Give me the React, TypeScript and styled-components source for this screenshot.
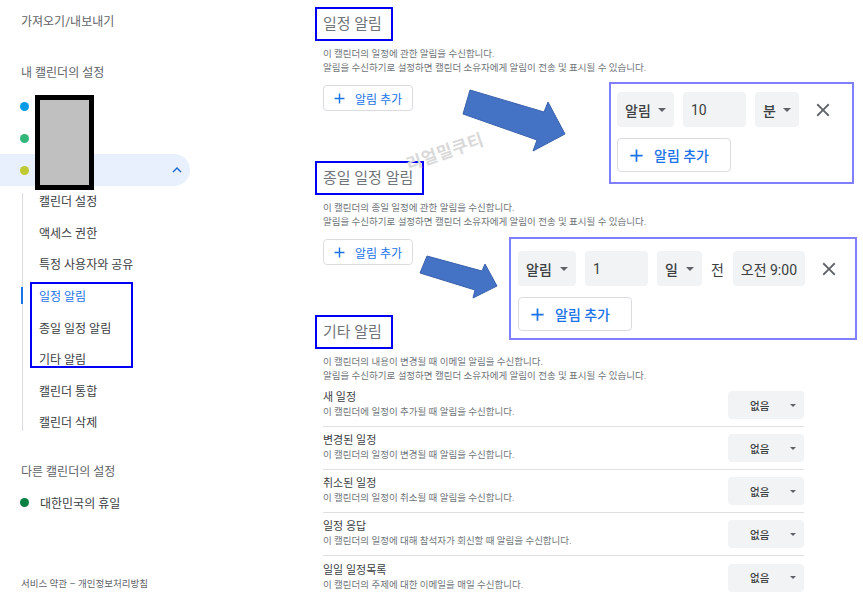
import React from "react";
import styled, { createGlobalStyle, css } from "styled-components";

const GlobalStyle = createGlobalStyle`
  html, body { margin: 0; padding: 0; background: #fff; }
  body { font-family: Roboto, "Noto Sans CJK KR", sans-serif; color: #3c4043; }
  * { box-sizing: border-box; }
`;

const Page = styled.div`
  position: relative;
  width: 863px;
  height: 592px;
  overflow: hidden;
  display: flex;
  background: #fff;
`;

/* ---------- sidebar ---------- */

const Sidebar = styled.nav`
  width: 300px;
  flex: none;
  display: flex;
  flex-direction: column;
  padding-top: 12px;

  & > * {
    flex: none;
  }
`;

const SideTitle = styled.div<{ $gap?: number }>`
  margin-top: ${(p) => p.$gap ?? 0}px;
  height: 20px;
  line-height: 20px;
  padding-left: 21px;
  font-size: 12px;
  color: #5f6368;
`;

const CalRow = styled.div<{ $open?: boolean; $gap?: number }>`
  display: flex;
  align-items: center;
  height: 32px;
  width: 190px;
  margin-top: ${(p) => p.$gap ?? 0}px;
  padding: 0 4px 0 20px;
  border-radius: 0 16px 16px 0;
  background: ${(p) => (p.$open ? "#e8f0fe" : "transparent")};
  font-size: 12px;
  color: #3c4043;
`;

const Dot = styled.span<{ $color: string }>`
  width: 9px;
  height: 9px;
  border-radius: 50%;
  background: ${(p) => p.$color};
  flex: none;
`;

const CalName = styled.span`
  margin-left: 11px;
  flex: 1;
`;

const SubList = styled.div`
  position: relative;
  margin-top: -1px;

  &::before {
    content: "";
    position: absolute;
    left: 22px;
    top: 8px;
    bottom: 7px;
    width: 1px;
    background: #dadce0;
  }
`;

const SubItem = styled.div<{ $active?: boolean }>`
  position: relative;
  height: 31.6px;
  display: flex;
  align-items: center;
  padding-left: 39px;
  font-size: 12px;
  color: ${(p) => (p.$active ? "#1a73e8" : "#3c4043")};

  ${(p) =>
    p.$active &&
    css`
      &::before {
        content: "";
        position: absolute;
        left: 21px;
        top: 7px;
        width: 2px;
        height: 17px;
        background: #1a73e8;
      }
    `}
`;

const Marked = styled.div`
  position: relative;

  &::after {
    content: "";
    position: absolute;
    left: 30px;
    top: 2px;
    width: 99px;
    bottom: 7px;
    border: 2px solid #0000f5;
    pointer-events: none;
  }
`;

const Footer = styled.div`
  margin-top: auto;
  padding: 0 0 1px 21px;
  font-size: 9.5px;
  line-height: 14px;
  color: #5f6368;
`;

/* ---------- main ---------- */

const Main = styled.main`
  flex: 1;
  display: flex;
  flex-direction: column;
  align-items: flex-start;
  padding: 7px 0 0 23px;

  & > * {
    flex: none;
  }
`;

const Heading = styled.h2<{ $gap?: number }>`
  margin: ${(p) => p.$gap ?? 0}px 0 0 -8px;
  height: 34px;
  line-height: 30px;
  padding: 0 9px 0 6px;
  border: 2px solid #0000f5;
  font-size: 15px;
  font-weight: 400;
  color: #70757a;
`;

const Desc = styled.p`
  margin: 6px 0 0;
  font-size: 9.5px;
  line-height: 14px;
  color: #70757a;
`;

const AddButton = styled.button<{ $big?: boolean }>`
  display: flex;
  align-items: center;
  gap: ${(p) => (p.$big ? 7 : 7)}px;
  margin-top: ${(p) => (p.$big ? 11 : 10)}px;
  width: ${(p) => (p.$big ? 114 : 90)}px;
  height: ${(p) => (p.$big ? 34 : 26)}px;
  padding: 0 0 0 ${(p) => (p.$big ? 8 : 7)}px;
  border: 1px solid #dadce0;
  border-radius: 4px;
  background: #fff;
  color: #1a73e8;
  font-family: inherit;
  font-size: ${(p) => (p.$big ? 14 : 12)}px;
  font-weight: ${(p) => (p.$big ? 500 : 400)};

  svg {
    flex: none;
    fill: #1a73e8;
  }
`;

const AlertList = styled.div`
  width: 481px;
  margin-top: 1px;
`;

const AlertRow = styled.div`
  display: flex;
  align-items: center;
  justify-content: space-between;
  height: 43px;
  border-bottom: 1px solid #e0e0e0;

  &:last-child {
    border-bottom: none;
  }
`;

const RowTitle = styled.div`
  font-size: 11px;
  line-height: 14px;
  color: #3c4043;
`;

const RowSub = styled.div`
  font-size: 9.5px;
  line-height: 14px;
  color: #70757a;
`;

const NoneSelect = styled.div`
  width: 76px;
  height: 28px;
  display: flex;
  align-items: center;
  justify-content: space-between;
  padding: 0 8px 0 22px;
  background: #f1f3f4;
  border-radius: 4px;
  font-size: 10.5px;
  font-weight: 500;
  color: #3c4043;
`;

const Caret = styled.span<{ $size: number }>`
  width: 0;
  height: 0;
  border-left: ${(p) => p.$size}px solid transparent;
  border-right: ${(p) => p.$size}px solid transparent;
  border-top: ${(p) => p.$size}px solid #5f6368;
`;

/* ---------- callouts and annotations ---------- */

const Callout = styled.div<{ $x: number; $y: number; $w: number; $h: number; $pad: string }>`
  position: absolute;
  left: ${(p) => p.$x}px;
  top: ${(p) => p.$y}px;
  width: ${(p) => p.$w}px;
  height: ${(p) => p.$h}px;
  padding: ${(p) => p.$pad};
  border: 2px solid #8080ff;
  background: #fff;
`;

const FieldRow = styled.div`
  display: flex;
  align-items: center;
  gap: 9px;
  height: 35px;
`;

const Field = styled.div<{ $w: number; $strong?: boolean; $center?: boolean }>`
  width: ${(p) => p.$w}px;
  height: 35px;
  flex: none;
  display: flex;
  align-items: center;
  justify-content: ${(p) => (p.$center ? "center" : "space-between")};
  padding: 0 ${(p) => (p.$center ? 2 : 8)}px;
  background: #f1f3f4;
  border-radius: 4px;
  font-size: 14px;
  font-weight: ${(p) => (p.$strong ? 500 : 400)};
  white-space: nowrap;
  color: #3c4043;
`;

const Word = styled.span`
  font-size: 14px;
  color: #3c4043;
`;

const CloseIcon = styled.svg`
  flex: none;
  margin-left: 4px;
  fill: #5f6368;
`;

const Watermark = styled.div`
  position: absolute;
  left: 404px;
  top: 138px;
  font-size: 17px;
  font-weight: 700;
  letter-spacing: 0.5px;
  color: #d9d9d9;
  transform: rotate(-19deg);
  pointer-events: none;
`;

const Redaction = styled.div`
  position: absolute;
  left: 35px;
  top: 95px;
  width: 59px;
  height: 95px;
  background: #c0c0c0;
  border: 5px solid #000;
`;

const ArrowLayer = styled.svg`
  position: absolute;
  left: 0;
  top: 0;
  pointer-events: none;

  polygon {
    fill: #4472c4;
    stroke: #3a62ad;
    stroke-width: 1;
  }
`;

const Plus = ({ size }: { size: number }) => (
  <svg width={size} height={size} viewBox="0 0 24 24">
    <path d="M19 13h-6v6h-2v-6H5v-2h6V5h2v6h6v2z" />
  </svg>
);

const Close = () => (
  <CloseIcon width={22} height={22} viewBox="0 0 24 24">
    <path d="M19 6.41L17.59 5 12 10.59 6.41 5 5 6.41 10.59 12 5 17.59 6.41 19 12 13.41 17.59 19 19 17.59 13.41 12z" />
  </CloseIcon>
);

const ExpandLess = () => (
  <svg width={18} height={18} viewBox="0 0 24 24" fill="#1967d2">
    <path d="M12 8l-6 6 1.41 1.41L12 10.83l4.59 4.58L18 14z" />
  </svg>
);

const subItems = ["캘린더 설정", "액세스 권한", "특정 사용자와 공유"];
const markedItems = ["일정 알림", "종일 일정 알림", "기타 알림"];
const tailItems = ["캘린더 통합", "캘린더 삭제"];

const alerts = [
  { title: "새 일정", sub: "이 캘린더에 일정이 추가될 때 알림을 수신합니다." },
  { title: "변경된 일정", sub: "이 캘린더의 일정이 변경될 때 알림을 수신합니다." },
  { title: "취소된 일정", sub: "이 캘린더의 일정이 취소될 때 알림을 수신합니다." },
  { title: "일정 응답", sub: "이 캘린더의 일정에 대해 참석자가 회신할 때 알림을 수신합니다." },
  { title: "일일 일정목록", sub: "이 캘린더의 주제에 대한 이메일을 매일 수신합니다." },
];

const SHARE_LINE = "알림을 수신하기로 설정하면 캘린더 소유자에게 알림이 전송 및 표시될 수 있습니다.";

export default function App() {
  return (
    <>
      <GlobalStyle />
      <Page>
        <Sidebar>
          <SideTitle>가져오기/내보내기</SideTitle>
          <SideTitle $gap={31}>내 캘린더의 설정</SideTitle>
          <CalRow $gap={7}>
            <Dot $color="#039be5" />
            <CalName />
          </CalRow>
          <CalRow>
            <Dot $color="#33b679" />
            <CalName />
          </CalRow>
          <CalRow $open>
            <Dot $color="#c0ca33" />
            <CalName />
            <ExpandLess />
          </CalRow>
          <SubList>
            {subItems.map((s) => (
              <SubItem key={s}>{s}</SubItem>
            ))}
            <Marked>
              {markedItems.map((s, i) => (
                <SubItem key={s} $active={i === 0}>
                  {s}
                </SubItem>
              ))}
            </Marked>
            {tailItems.map((s) => (
              <SubItem key={s}>{s}</SubItem>
            ))}
          </SubList>
          <SideTitle $gap={24}>다른 캘린더의 설정</SideTitle>
          <CalRow $gap={5}>
            <Dot $color="#0b8043" />
            <CalName>대한민국의 휴일</CalName>
          </CalRow>
          <Footer>서비스 약관 – 개인정보처리방침</Footer>
        </Sidebar>

        <Main>
          <Heading>일정 알림</Heading>
          <Desc>
            이 캘린더의 일정에 관한 알림을 수신합니다.
            <br />
            {SHARE_LINE}
          </Desc>
          <AddButton>
            <Plus size={17} />
            알림 추가
          </AddButton>

          <Heading $gap={50}>종일 일정 알림</Heading>
          <Desc>
            이 캘린더의 종일 일정에 관한 알림을 수신합니다.
            <br />
            {SHARE_LINE}
          </Desc>
          <AddButton>
            <Plus size={17} />
            알림 추가
          </AddButton>

          <Heading $gap={50}>기타 알림</Heading>
          <Desc>
            이 캘린더의 내용이 변경될 때 이메일 알림을 수신합니다.
            <br />
            {SHARE_LINE}
          </Desc>
          <AlertList>
            {alerts.map((a) => (
              <AlertRow key={a.title}>
                <div>
                  <RowTitle>{a.title}</RowTitle>
                  <RowSub>{a.sub}</RowSub>
                </div>
                <NoneSelect>
                  없음
                  <Caret $size={3} />
                </NoneSelect>
              </AlertRow>
            ))}
          </AlertList>
        </Main>

        <Redaction />
        <Watermark>리얼밀쿠티</Watermark>

        <ArrowLayer width={863} height={592} viewBox="0 0 863 592">
          <polygon points="470,90 544,112 548,102 565,134 533,151 537,140 463,114" />
          <polygon points="427,256 482,271 485,264 497,286 473,298 475,290 420,273" />
        </ArrowLayer>

        <Callout $x={609} $y={82} $w={245} $h={102} $pad="8px 6px">
          <FieldRow>
            <Field $w={57} $strong>
              알림
              <Caret $size={4} />
            </Field>
            <Field $w={63}>10</Field>
            <Field $w={44} $strong>
              분
              <Caret $size={4} />
            </Field>
            <Close />
          </FieldRow>
          <AddButton $big>
            <Plus size={21} />
            알림 추가
          </AddButton>
        </Callout>

        <Callout $x={509} $y={237} $w={348} $h={103} $pad="12px 7px">
          <FieldRow>
            <Field $w={58} $strong>
              알림
              <Caret $size={4} />
            </Field>
            <Field $w={63}>1</Field>
            <Field $w={45} $strong>
              일
              <Caret $size={4} />
            </Field>
            <Word>전</Word>
            <Field $w={72} $center>
              오전 9:00
            </Field>
            <Close />
          </FieldRow>
          <AddButton $big>
            <Plus size={21} />
            알림 추가
          </AddButton>
        </Callout>
      </Page>
    </>
  );
}
